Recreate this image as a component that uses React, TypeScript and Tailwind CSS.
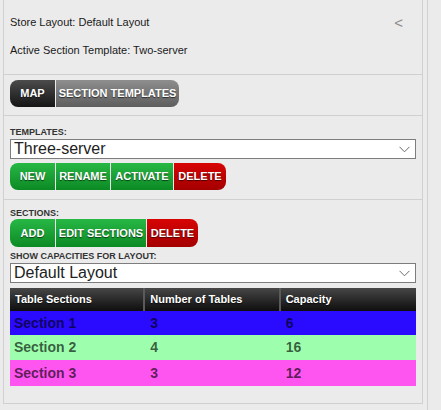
import React from "react"

const btnBase = "h-[27px] flex items-center justify-center text-[11px] font-bold text-white [text-shadow:0_1px_1px_rgba(0,0,0,0.6)] whitespace-nowrap"
const green = "bg-gradient-to-b from-[#27b845] to-[#0b8a24]"
const red = "bg-gradient-to-b from-[#d80404] to-[#a40000]"

function Select({ value }: { value: string }) {
    return (
        <div className="h-[20px] w-full bg-white border border-[#7d7d7d] flex items-center justify-between pl-[3px] pr-[5px]">
            <span className="text-[16px] leading-none text-[#222]">{value}</span>
            <svg width="11" height="7" viewBox="0 0 11 7" className="mt-[1px]">
                <path d="M0.5 0.8 L5.5 5.8 L10.5 0.8" fill="none" stroke="#6a6a6a" strokeWidth="1" />
            </svg>
        </div>
    )
}

const rows = [
    { name: "Section 1", tables: 3, cap: 6, bg: "bg-[#2b0bff]", h: "h-[24px]" },
    { name: "Section 2", tables: 4, cap: 16, bg: "bg-[#9dffad]", h: "h-[25px]" },
    { name: "Section 3", tables: 3, cap: 12, bg: "bg-[#ff55f0]", h: "h-[26px]" },
]

export default function App() {
    return (
        <div className="h-[410px] w-[441px] bg-[#ebebeb] flex overflow-hidden font-['Liberation_Sans',Arial,sans-serif]">
            <div className="ml-[3px] w-[420px] h-[404px] border-l border-r border-b border-[#d0d0d0] flex flex-col">
                {/* header */}
                <div className="h-[75px] border-b border-[#d0d0d0] px-[6px] pt-[15px] text-[11px] text-[#1a1a1a]">
                    <div className="h-[14px] flex items-center justify-between pr-[13px]">
                        <span>Store Layout: Default Layout</span>
                        <span className="text-[15px] text-[#8a8a8a] leading-none">&lt;</span>
                    </div>
                    <div className="h-[14px] mt-[14px] flex items-center">Active Section Template: Two-server</div>
                </div>

                {/* tabs */}
                <div className="h-[41px] border-b border-[#d0d0d0] px-[6px] pt-[5px] flex gap-[1px]">
                    <div className={`${btnBase} w-[45px] rounded-l-[8px] bg-gradient-to-b from-[#4c4c4c] to-[#161616]`}>MAP</div>
                    <div className={`${btnBase} w-[123px] rounded-r-[8px] bg-gradient-to-b from-[#8e8e8e] to-[#5e5e5e]`}>SECTION TEMPLATES</div>
                </div>

                {/* templates */}
                <div className="h-[84px] border-b border-[#d0d0d0] px-[6px] pt-[10px]">
                    <div className="h-[13px] text-[9px] font-bold text-[#333] leading-[13px]">TEMPLATES:</div>
                    <Select value="Three-server" />
                    <div className="flex gap-[1px] mt-[4px]">
                        <div className={`${btnBase} ${green} w-[45px] rounded-l-[8px]`}>NEW</div>
                        <div className={`${btnBase} ${green} w-[54px]`}>RENAME</div>
                        <div className={`${btnBase} ${green} w-[62px]`}>ACTIVATE</div>
                        <div className={`${btnBase} ${red} w-[52px] rounded-r-[8px]`}>DELETE</div>
                    </div>
                </div>

                {/* sections */}
                <div className="flex-1 px-[6px] pt-[7px]">
                    <div className="h-[12px] text-[9px] font-bold text-[#333] leading-[12px]">SECTIONS:</div>
                    <div className="flex gap-[1px]">
                        <div className={`${btnBase} ${green} h-[28px] w-[45px] rounded-l-[8px]`}>ADD</div>
                        <div className={`${btnBase} ${green} h-[28px] w-[90px]`}>EDIT SECTIONS</div>
                        <div className={`${btnBase} ${red} h-[28px] w-[51px] rounded-r-[8px]`}>DELETE</div>
                    </div>
                    <div className="h-[16px] pt-[2px] text-[9px] font-bold text-[#333] leading-[14px]">SHOW CAPACITIES FOR LAYOUT:</div>
                    <Select value="Default Layout" />
                    <div className="mt-[5px] w-full">
                        <div className="h-[23px] grid grid-cols-3 bg-gradient-to-b from-[#474747] to-[#0f0f0f] text-[11px] font-bold text-white [text-shadow:0_1px_1px_rgba(0,0,0,0.7)]">
                            <div className="flex items-center pl-[5px] border-r-2 border-[#5a5a5a]">Table Sections</div>
                            <div className="flex items-center pl-[5px] border-r-2 border-[#5a5a5a]">Number of Tables</div>
                            <div className="flex items-center pl-[5px]">Capacity</div>
                        </div>
                        {rows.map((r) => (
                            <div key={r.name} className={`${r.h} ${r.bg} grid grid-cols-3 text-[14px] font-bold text-black/65`}>
                                <div className="flex items-center pl-[4px]">{r.name}</div>
                                <div className="flex items-center pl-[5px]">{r.tables}</div>
                                <div className="flex items-center pl-[5px]">{r.cap}</div>
                            </div>
                        ))}
                    </div>
                </div>
            </div>
            <div className="ml-[4px] h-full border-l border-[#d0d0d0]" />
        </div>
    )
}
